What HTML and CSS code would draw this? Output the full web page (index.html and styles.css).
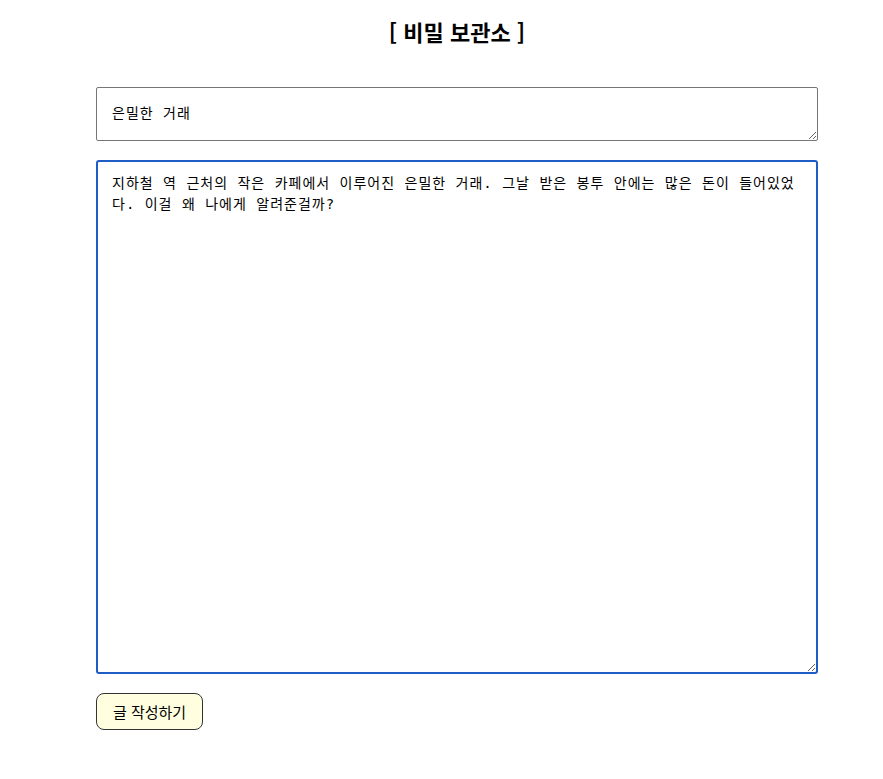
FILE: index.html
```html
<!DOCTYPE html>
<html lang="ko">
<head>
<meta charset="utf-8">
<title>비밀 보관소</title>
<link rel="stylesheet" href="styles.css">
</head>
<body>
<div class="page">
  <h1 class="title">[ 비밀 보관소 ]</h1>
  <form class="form">
    <textarea class="field field-title" rows="1">은밀한 거래</textarea>
    <textarea class="field field-body focused">지하철 역 근처의 작은 카페에서 이루어진 은밀한 거래. 그날 받은 봉투 안에는 많은 돈이 들어있었다. 이걸 왜 나에게 알려준걸까?</textarea>
    <div class="actions">
      <button type="button" class="submit">글 작성하기</button>
    </div>
  </form>
</div>
</body>
</html>
```

FILE: styles.css
```css
* { box-sizing: border-box; }
html, body { margin: 0; padding: 0; background: #fff; }
body { font-family: "Noto Sans CJK KR", "Noto Sans", sans-serif; color: #000; }
.page {
  width: 722px;
  margin-left: 96px;
  padding-top: 15px;
}
.title {
  margin: 0;
  text-align: center;
  font-size: 22px;
  font-weight: 700;
  line-height: 32px;
}
.form {
  margin-top: 40px;
  display: flex;
  flex-direction: column;
  gap: 19px;
}
.field {
  display: block;
  width: 100%;
  font-family: "DejaVu Sans Mono", "Noto Sans CJK KR", monospace;
  font-size: 14px;
  letter-spacing: 1px;
  line-height: 20px;
  padding: 15px 14px 17px 15px;
  border: 1px solid #767676;
  border-radius: 2px;
  color: #000;
  background: #fff;
  margin: 0;
}
.field-title { height: 54px; }
.field-body {
  height: 514px;
  line-height: 21px;
  padding: 11px 12px 12px 14px;
}
.focused {
  border: 2px solid #1f5cc5;
  border-radius: 3px;
  outline: none;
}
.actions { display: flex; }
.submit {
  font-family: "Noto Sans CJK KR", "Noto Sans", sans-serif;
  font-size: 15px;
  width: 107px;
  height: 37px;
  padding: 0;
  background: #ffffe0;
  border: 1px solid #333;
  border-radius: 8px;
  color: #000;
}
```
